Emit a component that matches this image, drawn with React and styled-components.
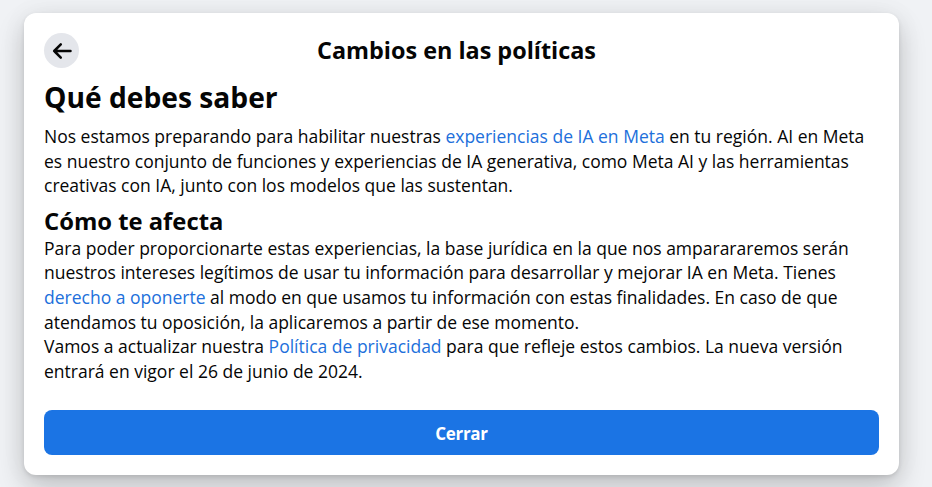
import React from 'react';
import styled, { createGlobalStyle } from 'styled-components';

const GlobalStyle = createGlobalStyle`
  html, body {
    margin: 0;
    height: 100%;
    background: #f0f2f5;
    overflow: hidden;
    font-family: "Open Sans", "Noto Sans", sans-serif;
  }
`;

const Page = styled.div`
  width: 932px;
  height: 487px;
  padding: 13px 33px 12px 24px;
  box-sizing: border-box;
`;

const Card = styled.section`
  height: 462px;
  box-sizing: border-box;
  padding: 20px;
  background: #fff;
  border-radius: 12px;
  box-shadow: 0 12px 28px rgba(0, 0, 0, 0.2), 0 2px 4px rgba(0, 0, 0, 0.1), 0 0 30px rgba(0, 0, 0, 0.04);
  display: flex;
  flex-direction: column;
`;

const Header = styled.header`
  display: grid;
  grid-template-columns: 35px 1fr 45px;
  align-items: center;
  height: 35px;
`;

const BackButton = styled.button`
  width: 35px;
  height: 35px;
  padding: 0;
  border: 0;
  border-radius: 50%;
  background: #e4e6eb;
  display: flex;
  align-items: center;
  justify-content: center;
`;

const Title = styled.h1`
  margin: 0;
  text-align: center;
  font-size: 23.4px;
  line-height: 35px;
  font-weight: 700;
  color: #050505;
`;

const Heading = styled.h2`
  margin: ${(p) => p.$top}px 0 0;
  font-size: ${(p) => p.$size}px;
  line-height: ${(p) => p.$line}px;
  font-weight: 700;
  color: #050505;
`;

const Body = styled.div`
  flex: 1;
`;

const Text = styled.p`
  margin: ${(p) => p.$top || 0}px 0 0;
  font-size: 17.5px;
  line-height: 24.6px;
  color: #050505;
`;

const Anchor = styled.a`
  color: #216fdb;
  text-decoration: none;
`;

const CloseButton = styled.button`
  height: 45px;
  width: 100%;
  padding: 2px 0 0;
  border: 0;
  border-radius: 8px;
  background: #1b74e4;
  color: #fff;
  font-family: inherit;
  font-size: 17px;
  font-weight: 700;
  letter-spacing: -0.3px;
`;

export default function App() {
  return (
    <>
      <GlobalStyle />
      <Page>
        <Card>
          <Header>
            <BackButton aria-label="Atrás">
              <svg width="20" height="20" viewBox="0 0 20 20" fill="none" stroke="#050505" strokeWidth="2.5" strokeLinecap="round" strokeLinejoin="round">
                <path d="M18.5 10H2.2M8.8 3.4 2.2 10l6.6 6.6" />
              </svg>
            </BackButton>
            <Title>Cambios en las políticas</Title>
          </Header>
          <Body>
            <Heading $top={11} $size={28.2} $line={36}>Qué debes saber</Heading>
            <Text $top={9}>
              Nos estamos preparando para habilitar nuestras <Anchor href="#">experiencias de IA en Meta</Anchor> en tu región. AI en Meta es nuestro conjunto de funciones y experiencias de IA generativa, como Meta AI y las herramientas creativas con IA, junto con los modelos que las sustentan.
            </Text>
            <Heading $top={8} $size={23.8} $line={30}>Cómo te afecta</Heading>
            <Text>
              Para poder proporcionarte estas experiencias, la base jurídica en la que nos amparararemos serán nuestros intereses legítimos de usar tu información para desarrollar y mejorar IA en Meta. Tienes <Anchor href="#">derecho a oponerte</Anchor> al modo en que usamos tu información con estas finalidades. En caso de que atendamos tu oposición, la aplicaremos a partir de ese momento.
            </Text>
            <Text>
              Vamos a actualizar nuestra <Anchor href="#">Política de privacidad</Anchor> para que refleje estos cambios. La nueva versión entrará en vigor el 26 de junio de 2024.
            </Text>
          </Body>
          <CloseButton>Cerrar</CloseButton>
        </Card>
      </Page>
    </>
  );
}
